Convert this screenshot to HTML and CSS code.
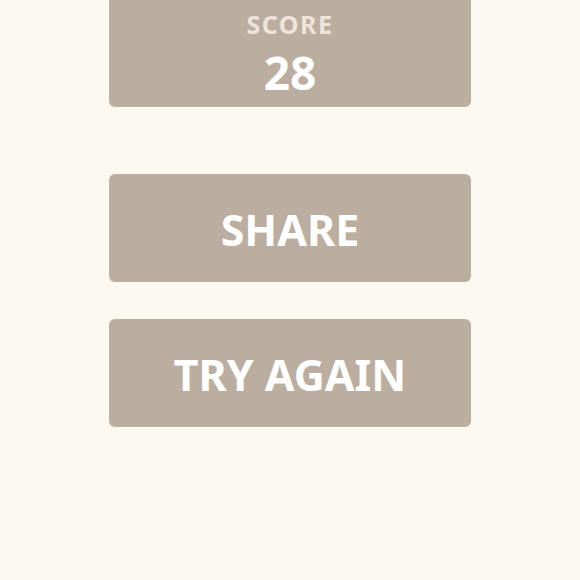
FILE: index.html
```html
<!DOCTYPE html>
<html lang="en">
<head>
  <meta charset="UTF-8">
  <meta name="viewport" content="width=device-width, initial-scale=1.0">
  <title>Game Over</title>
  <link rel="stylesheet" href="styles.css">
</head>
<body>
  <div class="panel">
    <div class="score-box">
      <div class="score-label">SCORE</div>
      <div class="score-value">28</div>
    </div>

    <button class="btn btn-share">SHARE</button>
    <button class="btn">TRY AGAIN</button>
  </div>
</body>
</html>
```

FILE: styles.css
```css
body {
  margin: 0;
  background: #faf8ef;
  font-family: "Noto Sans", "Open Sans", sans-serif;
}
.panel {
  width: 362px;
  margin: 0 auto;
  display: flex;
  flex-direction: column;
}
.score-box {
  margin-top: -10px;
  padding: 22px 0 12px;
  background: #bbada0;
  border-radius: 6px;
  text-align: center;
}
.score-label {
  font-size: 25px;
  line-height: 1;
  font-weight: 700;
  color: #eee4da;
  letter-spacing: 1.5px;
  margin-bottom: 12px;
}
.score-value {
  font-size: 46px;
  line-height: 1;
  font-weight: 700;
  color: #ffffff;
}
.btn {
  height: 108px;
  padding: 3px 0 0;
  border: none;
  border-radius: 6px;
  background: #bbada0;
  color: #ffffff;
  font-family: inherit;
  font-size: 43px;
  font-weight: 700;
  line-height: 1;
  margin-top: 37px;
}
.btn-share {
  margin-top: 67px;
}
```
